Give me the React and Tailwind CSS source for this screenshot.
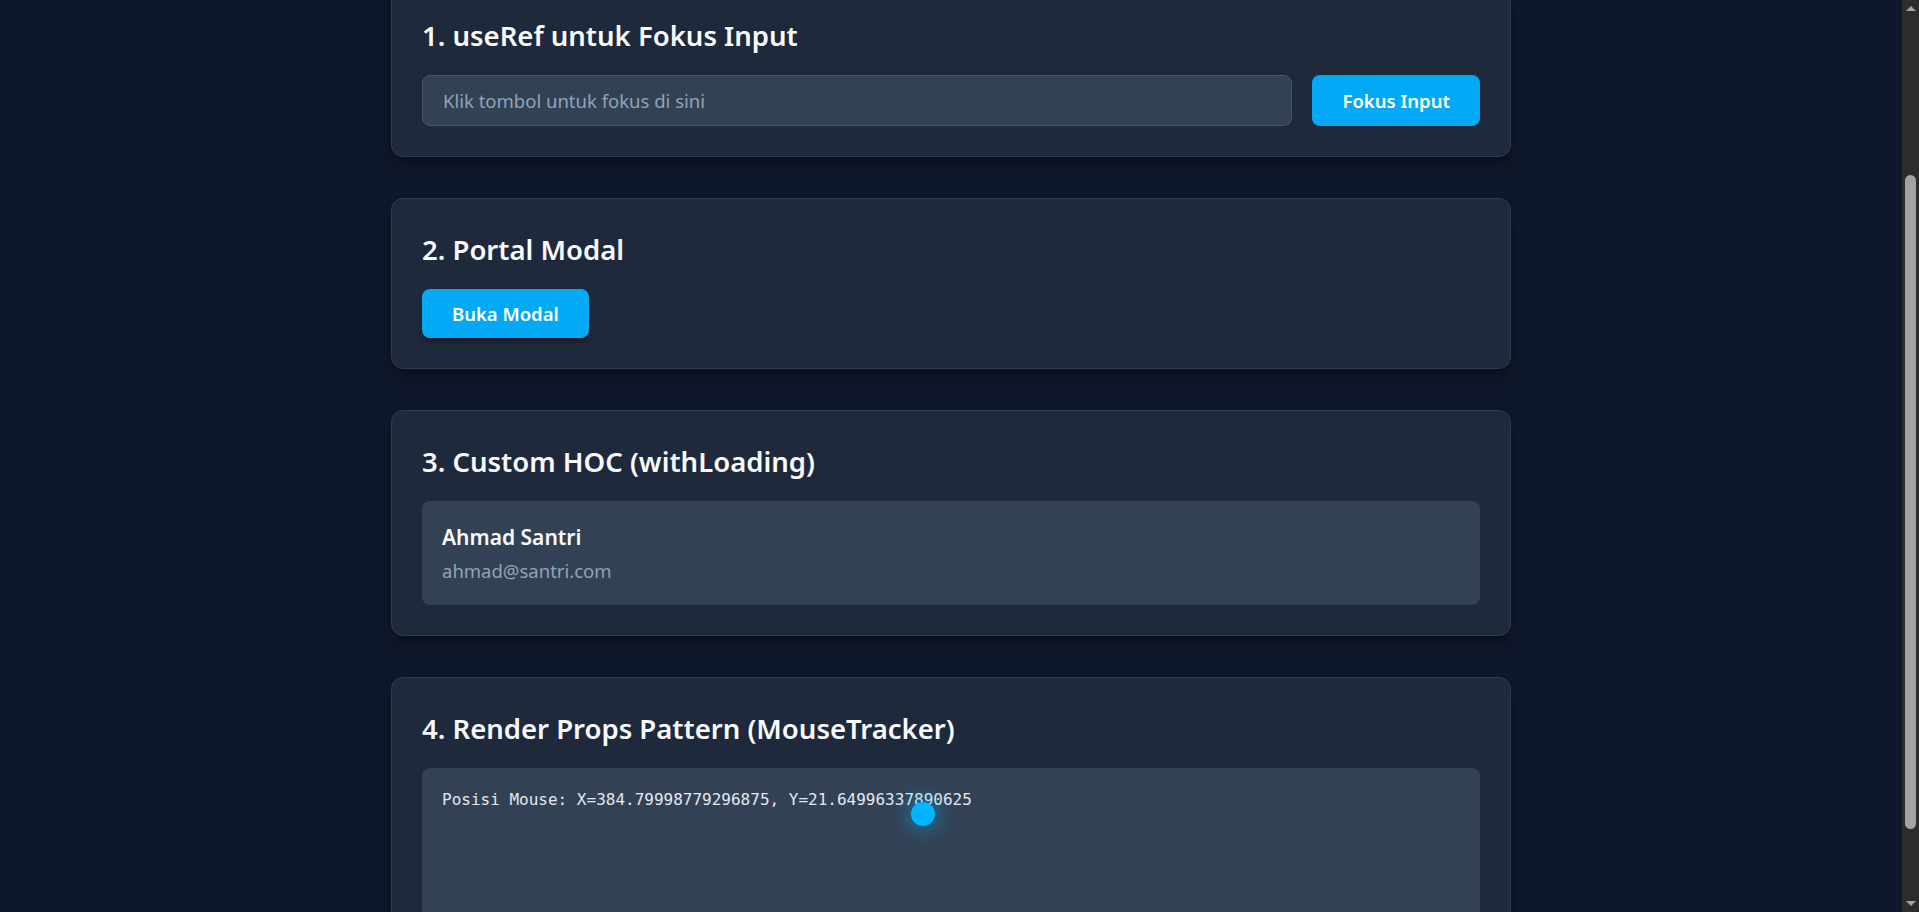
import React, { useLayoutEffect, useEffect, useRef, useState } from "react";

function Card({ title, children }) {
  return (
    <section className="mb-[41px] rounded-xl border border-[#2f3b50] bg-[#1e293b] p-[30px] shadow-lg shadow-black/30">
      <h2 className="mb-6 pt-[6px] text-[27.5px] font-semibold leading-[30px] text-[#f8fafc]">{title}</h2>
      {children}
    </section>
  );
}

function withLoading(Component) {
  return function Wrapped({ loading, ...props }) {
    if (loading) {
      return <div className="text-lg text-slate-400">Memuat...</div>;
    }
    return <Component {...props} />;
  };
}

function UserCard({ name, email }) {
  return (
    <div className="rounded-lg bg-[#334155] p-5">
      <div className="mb-[4px] text-[21px] font-semibold leading-[32px] text-[#f8fafc]">{name}</div>
      <div className="text-[18.5px] leading-[28px] text-[#94a3b8]">{email}</div>
    </div>
  );
}

const UserWithLoading = withLoading(UserCard);

function MouseTracker({ render }) {
  const [pos, setPos] = useState({ x: 384.79998779296875, y: 21.64996337890625, dx: 501, dy: 46 });
  const onMove = (e) => {
    const r = e.currentTarget.getBoundingClientRect();
    setPos({ x: e.clientX - r.left, y: e.clientY - r.top, dx: e.clientX - r.left, dy: e.clientY - r.top });
  };
  return (
    <div
      onMouseMove={onMove}
      className="relative h-[200px] overflow-hidden rounded-lg bg-[#334155] p-5"
    >
      {render(pos)}
    </div>
  );
}

function FakeScrollbar() {
  return (
    <div className="pointer-events-none fixed right-0 top-0 z-40 flex h-screen w-[17px] flex-col items-center bg-[#2c2c2c]">
      <div className="flex h-[17px] w-full items-center justify-center">
        <div className="h-0 w-0 border-x-[5px] border-b-[5px] border-x-transparent border-b-[#a3a3a3]" />
      </div>
      <div className="flex w-full flex-1 flex-col">
        <div className="h-[158px]" />
        <div className="mx-auto h-[654px] w-[11px] rounded-full bg-[#a3a3a3]" />
      </div>
      <div className="flex h-[17px] w-full items-center justify-center">
        <div className="h-0 w-0 border-x-[5px] border-t-[5px] border-x-transparent border-t-[#a3a3a3]" />
      </div>
    </div>
  );
}

export default function App() {
  const inputRef = useRef(null);
  const [open, setOpen] = useState(false);

  useLayoutEffect(() => {
    window.scrollTo(0, 219);
  }, []);
  useEffect(() => {
    window.scrollTo(0, 219);
    const t = setTimeout(() => window.scrollTo(0, 219), 50);
    return () => clearTimeout(t);
  }, []);

  return (
    <div className="min-h-screen bg-[#0f172a] pr-[17px] font-['Segoe_UI','Noto_Sans',sans-serif] text-slate-100">
      <FakeScrollbar />
      <div className="mx-auto max-w-6xl px-4 pt-10">
        <h1 className="mb-3 text-center text-4xl font-bold leading-[48px] text-[#f8fafc]">Konsep Lanjutan React</h1>
        <p className="mb-[75px] text-center text-lg leading-7 text-slate-400">useRef, Portal, HOC, dan Render Props</p>

        <Card title="1. useRef untuk Fokus Input">
          <div className="flex gap-5">
            <input
              ref={inputRef}
              type="text"
              placeholder="Klik tombol untuk fokus di sini"
              className="min-w-0 flex-1 rounded-lg border border-[#475569] bg-[#334155] px-5 py-3 text-[18.5px] leading-[25px] text-slate-100 outline-none placeholder:text-[#94a3b8]"
            />
            <button
              onClick={() => inputRef.current && inputRef.current.focus()}
              className="rounded-lg bg-[#03a9f4] px-[30px] text-[18.5px] font-semibold leading-[25px] text-white"
            >
              Fokus Input
            </button>
          </div>
        </Card>

        <Card title="2. Portal Modal">
          <button
            onClick={() => setOpen(true)}
            className="rounded-lg bg-[#03a9f4] px-[30px] py-3 text-[18.5px] font-semibold leading-[25px] text-white shadow-md shadow-black/30"
          >
            Buka Modal
          </button>
          {open && (
            <div className="fixed inset-0 z-50 flex items-center justify-center bg-black/60" onClick={() => setOpen(false)}>
              <div className="rounded-xl bg-[#1e293b] p-8 text-lg text-white">Ini adalah modal</div>
            </div>
          )}
        </Card>

        <Card title="3. Custom HOC (withLoading)">
          <UserWithLoading loading={false} name="Ahmad Santri" email="ahmad@santri.com" />
        </Card>

        <Card title="4. Render Props Pattern (MouseTracker)">
          <MouseTracker
            render={(p) => (
              <>
                <p className="font-['DejaVu_Sans_Mono',monospace] text-[16px] leading-6 text-[#e2e8f0]">
                  Posisi Mouse: X={p.x}, Y={p.y}
                </p>
                <div
                  className="pointer-events-none absolute h-6 w-6 -translate-x-1/2 -translate-y-1/2 rounded-full bg-[#00b4ff] shadow-[0_0_18px_6px_rgba(0,180,255,0.35)]"
                  style={{ left: p.dx, top: p.dy }}
                />
              </>
            )}
          />
        </Card>
      </div>
    </div>
  );
}
